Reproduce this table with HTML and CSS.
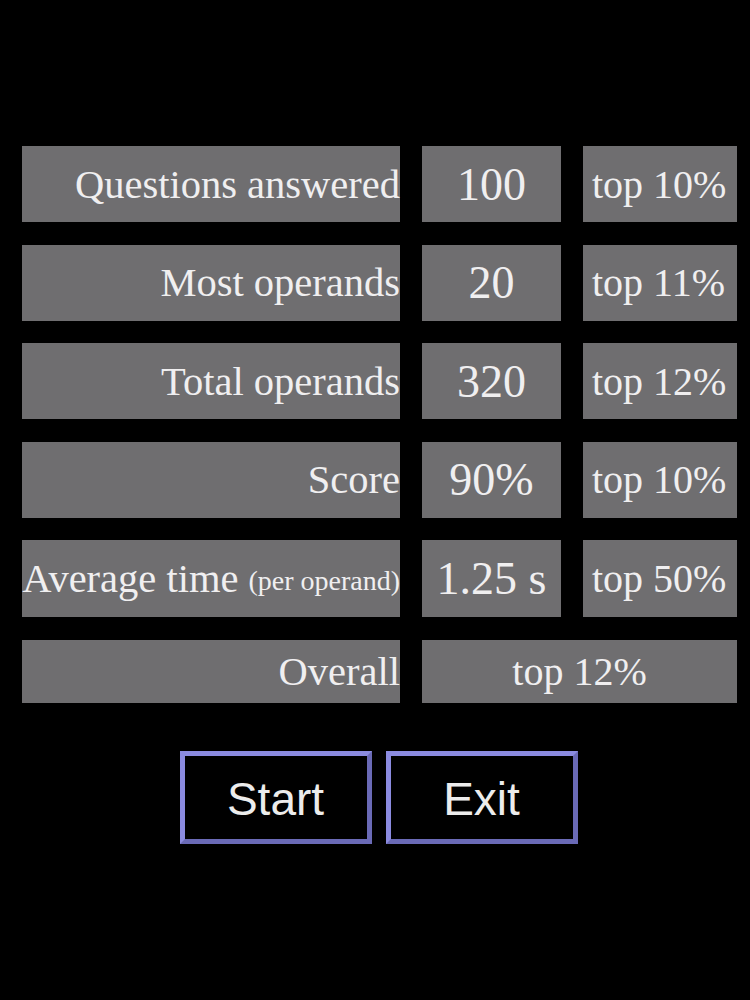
FILE: index.html
```html
<!DOCTYPE html>
<html>
<head>
<meta charset="utf-8">
<link rel="stylesheet" href="styles.css">
</head>
<body>
<div class="page">
  <div class="stats">
    <div class="cell label">Questions answered</div>
    <div class="cell value">100</div>
    <div class="cell rank">top 10%</div>

    <div class="cell label">Most operands</div>
    <div class="cell value">20</div>
    <div class="cell rank">top 11%</div>

    <div class="cell label">Total operands</div>
    <div class="cell value">320</div>
    <div class="cell rank">top 12%</div>

    <div class="cell label">Score</div>
    <div class="cell value">90%</div>
    <div class="cell rank">top 10%</div>

    <div class="cell label">Average time <span class="small">(per operand)</span></div>
    <div class="cell value">1.25 s</div>
    <div class="cell rank">top 50%</div>

    <div class="cell label overall">Overall</div>
    <div class="cell rank overall-rank">top 12%</div>
  </div>
  <div class="buttons">
    <button class="btn">Start</button>
    <button class="btn">Exit</button>
  </div>
</div>
</body>
</html>
```

FILE: styles.css
```css
html, body {
  margin: 0;
  padding: 0;
  background: #000;
}
.page {
  width: 715px;
  margin-left: 22px;
  padding-top: 146px;
}
.stats {
  display: grid;
  grid-template-columns: 378px 139px 154px;
  grid-template-rows: 76px 76px 76px 76px 77px 63px;
  column-gap: 22px;
  row-gap: 22.5px;
}
.cell {
  background: #6f6e70;
  color: #f0eff0;
  font-family: "Liberation Serif", "Times New Roman", serif;
  font-size: 40px;
  display: flex;
  align-items: center;
  white-space: nowrap;
}
.label {
  justify-content: flex-end;
  font-size: 40.5px;
}
.value {
  justify-content: center;
  font-size: 46px;
}
.rank {
  justify-content: flex-start;
  padding-left: 9px;
}
.overall-rank {
  grid-column: 2 / span 2;
  justify-content: center;
  padding-left: 0;
}
.small {
  font-size: 28px;
  margin-left: 10px;
  padding-top: 4px;
}
.buttons {
  display: flex;
  justify-content: center;
  gap: 14px;
  margin-top: 48px;
  margin-left: -2px;
}
.btn {
  width: 192px;
  height: 93px;
  background: #000;
  color: #ececec;
  font-family: "Liberation Sans", Arial, sans-serif;
  font-size: 46px;
  border-style: solid;
  border-width: 5px;
  border-color: #8b8be0 #6a6ab6 #6a6ab6 #8b8be0;
  padding: 4px 0 0 0;
  margin: 0;
  box-sizing: border-box;
}
```
